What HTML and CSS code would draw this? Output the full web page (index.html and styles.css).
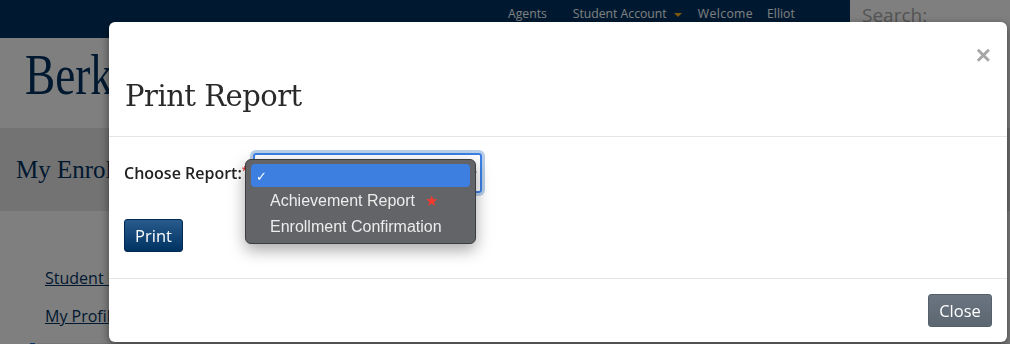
FILE: index.html
```html
<!DOCTYPE html>
<html lang="en">
<head>
    <meta charset="UTF-8">
    <title>My Enrollment - Print Report</title>
    <link rel="stylesheet" href="styles.css">
</head>
<body>

<div class="page">
    <div class="topbar">
        <nav class="topnav">
            <a class="nav-agents" href="#">Agents</a>
            <a class="nav-account" href="#">Student Account <span class="caret"></span></a>
            <span class="nav-welcome">Welcome</span>
            <span>Elliot</span>
        </nav>
        <div class="search">Search:</div>
    </div>

    <div class="brand">Berkeley</div>

    <div class="band">
        <h1>My Enrollment</h1>
    </div>

    <ul class="sidenav">
        <li><a href="#">Student Info</a></li>
        <li><a href="#">My Profile</a></li>
        <li class="active"></li>
    </ul>
</div>

<div class="backdrop"></div>

<div class="modal">
    <div class="modal-header">
        <h2>Print Report</h2>
        <button class="close-x" type="button">&times;</button>
    </div>

    <div class="modal-body">
        <div class="form-row">
            <label class="label">Choose Report:<span class="req">*</span></label>
            <div class="select">
                <span class="arrows">&#8693;</span>
            </div>

            <!-- open native menu -->
            <ul class="menu">
                <li class="picked"><span class="tick">&#10003;</span></li>
                <li>Achievement Report <span class="star">&#9733;</span></li>
                <li>Enrollment Confirmation</li>
            </ul>
        </div>

        <button class="btn btn-print" type="button">Print</button>
    </div>

    <div class="modal-footer">
        <button class="btn btn-close" type="button">Close</button>
    </div>
</div>

</body>
</html>
```

FILE: styles.css
```css
* {
    box-sizing: border-box;
}

body {
    margin: 0;
    background: #ffffff;
    font-family: "Open Sans", "Liberation Sans", sans-serif;
    overflow: hidden;
}

/* page under the dialog */

.page {
    width: 1010px;
    height: 344px;
    overflow: hidden;
}

.topbar {
    height: 38px;
    background: #003262;
    display: flex;
}

.topnav {
    display: flex;
    margin-left: 508px;
    margin-right: auto;
    padding-top: 5px;
    font-size: 12.2px;
    white-space: nowrap;
}

.topnav a,
.topnav span {
    color: #ffffff;
    text-decoration: none;
}

.nav-agents {
    margin-right: 26px;
}

.nav-account {
    margin-right: 16px;
}

.nav-welcome {
    margin-right: 14px;
    letter-spacing: 0.4px;
}

.caret {
    display: inline-block;
    width: 0;
    height: 0;
    margin-left: 4px;
    vertical-align: middle;
    border-left: 4px solid transparent;
    border-right: 4px solid transparent;
    border-top: 4px solid #fdb515;
}

.search {
    width: 160px;
    height: 40px;
    background: #ffffff;
    color: #a8a8a8;
    font-size: 19px;
    padding: 2px 12px;
}

.brand {
    height: 90px;
    padding: 4px 25px 0;
    font-family: "Liberation Serif", serif;
    font-size: 58px;
    line-height: 1.15;
    color: #003262;
    transform: scaleX(0.78);
    transform-origin: 25px 0;
}

.band {
    height: 83px;
    background: #e6e6e6;
    display: flex;
    align-items: center;
    padding: 0 16px;
}

.band h1 {
    margin: 0;
    font-family: "Liberation Serif", serif;
    font-weight: 400;
    font-size: 25px;
    color: #003262;
}

.sidenav {
    list-style: none;
    margin: 0;
    padding: 56px 0 0 30px;
}

.sidenav li {
    height: 38px;
    padding-left: 15px;
    font-size: 16px;
}

.sidenav a {
    color: #003262;
}

.sidenav .active {
    border-left: 5px solid #1a73d0;
    background: #efefef;
}

/* dialog */

.backdrop {
    position: fixed;
    inset: 0;
    background: rgba(0, 0, 0, 0.5);
}

.modal {
    position: absolute;
    left: 109px;
    top: 22px;
    width: 898px;
    height: 320px;
    background: #ffffff;
    border-radius: 6px;
    display: flex;
    flex-direction: column;
    box-shadow: 0 3px 9px rgba(0, 0, 0, 0.5);
}

.modal-header {
    height: 115px;
    border-bottom: 1px solid #e5e5e5;
    display: flex;
    justify-content: space-between;
    align-items: flex-end;
    padding: 0 16px 22px 16px;
}

.modal-header h2 {
    margin: 0;
    font-family: "DejaVu Serif", serif;
    font-weight: 400;
    font-size: 29px;
    line-height: 36px;
    color: #2a2a2a;
    letter-spacing: -0.5px;
}

.close-x {
    align-self: flex-start;
    margin-top: 22px;
    border: 0;
    background: none;
    padding: 0;
    font-family: "Liberation Sans", sans-serif;
    font-size: 26px;
    font-weight: 700;
    line-height: 22px;
    color: #a6a6a6;
}

.modal-body {
    height: 142px;
    border-bottom: 1px solid #e5e5e5;
    padding: 16px 15px 0 15px;
}

.form-row {
    position: relative;
    display: flex;
    align-items: center;
    height: 40px;
}

.label {
    width: 129px;
    font-size: 16px;
    font-weight: 600;
    color: #222222;
    white-space: nowrap;
}

.req {
    color: #e02020;
    font-size: 11px;
    vertical-align: top;
}

.select {
    width: 229px;
    height: 40px;
    border: 2px solid #3b80e6;
    border-radius: 3px;
    box-shadow: 0 0 0 3px #b9cfe8;
    display: flex;
    justify-content: flex-end;
    align-items: center;
    padding-right: 3px;
}

.arrows {
    font-size: 10px;
    color: #333333;
}

.menu {
    position: absolute;
    left: 121px;
    top: 6px;
    width: 231px;
    margin: 0;
    padding: 4px 5px;
    list-style: none;
    background: #626467;
    border: 1px solid #3c3d3f;
    border-radius: 6px;
    box-shadow: 0 6px 16px rgba(0, 0, 0, 0.35);
    font-family: "Liberation Sans", sans-serif;
    font-size: 16px;
    color: #ececec;
}

.menu li {
    height: 24px;
    line-height: 24px;
    padding-left: 19px;
    border-radius: 4px;
    margin-bottom: 2px;
}

.menu li:last-child {
    margin-bottom: 0;
}

.menu .picked {
    height: 23px;
    padding-left: 5px;
    background: #3d7fe1;
    color: #ffffff;
}

.tick {
    font-size: 13px;
}

.star {
    color: #f23b2e;
    font-size: 15px;
    margin-left: 6px;
}

.btn {
    height: 33px;
    border-radius: 3px;
    color: #ffffff;
    font-family: "Open Sans", sans-serif;
    font-size: 16.5px;
    padding: 0 8px;
    cursor: pointer;
}

.btn-print {
    margin-top: 26px;
    width: 59px;
    border: 1px solid #002a52;
    background: linear-gradient(#285a8c, #003262);
}

.modal-footer {
    flex: 1;
    display: flex;
    justify-content: flex-end;
    padding: 15px 15px 0 0;
}

.btn-close {
    width: 64px;
    border: 1px solid #55606b;
    background: linear-gradient(#6a7581, #5b6671);
}
```
